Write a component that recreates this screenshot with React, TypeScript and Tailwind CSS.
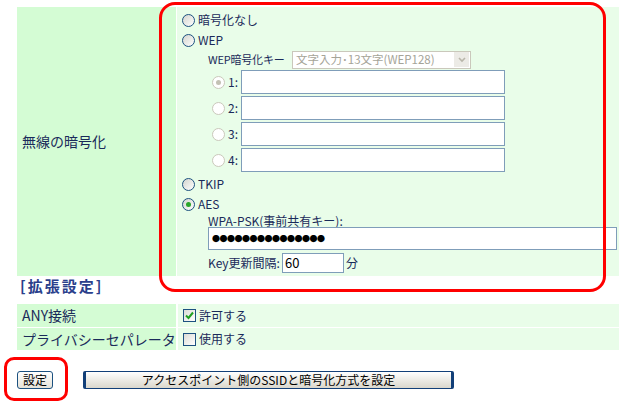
import React from 'react';

const font = { fontFamily: '"Noto Sans CJK JP", "Liberation Sans", sans-serif' };

function Radio({ checked = false, disabled = false }: { checked?: boolean; disabled?: boolean }) {
  return (
    <span
      className={`relative inline-flex h-[13px] w-[13px] shrink-0 items-center justify-center rounded-full border ${
        disabled
          ? 'border-[#cac8bb] bg-white'
          : 'border-[#1c5180] bg-gradient-to-br from-[#d4d4ce] to-white'
      }`}
    >
      {checked && (
        <span
          className={`h-[5px] w-[5px] rounded-full ${disabled ? 'bg-[#c3c1b4]' : 'bg-[#2aa52a]'}`}
        />
      )}
    </span>
  );
}

function Checkbox({ checked = false }: { checked?: boolean }) {
  return (
    <span className="inline-flex h-[13px] w-[13px] shrink-0 items-center justify-center border border-[#1c5180] bg-gradient-to-br from-[#dcdcd6] to-white">
      {checked && (
        <svg width="9" height="9" viewBox="0 0 9 9">
          <path d="M1 4.5 L3.5 7 L8 1.5" stroke="#21a121" strokeWidth="2" fill="none" />
        </svg>
      )}
    </span>
  );
}

function RadioRow({ label, checked }: { label: string; checked?: boolean }) {
  return (
    <div className="flex h-[20px] items-center gap-[3px] pl-[5px]">
      <Radio checked={checked} />
      <span>{label}</span>
    </div>
  );
}

function KeyRow({ n, checked }: { n: number; checked?: boolean }) {
  return (
    <div className="mb-[2px] flex h-[24px] items-center pl-[4px]">
      <Radio disabled checked={checked} />
      <span className="ml-[3px] w-[13px]">{n}:</span>
      <input className="h-[24px] w-[264px] border border-[#7f9db9] bg-white outline-none" />
    </div>
  );
}

export default function App() {
  return (
    <div style={font} className="relative h-[412px] w-[626px] overflow-hidden bg-white text-[12px] text-[#1a2a5a]">
      <div className="w-[619px] pl-[17px] pt-[7px]">
        {/* 無線の暗号化 */}
        <div className="flex gap-px">
          <div className="flex w-[159px] items-center bg-[#d4fcd4] pl-[5px] text-[14px]">無線の暗号化</div>
          <div className="flex-1 bg-[#e9fde9] pb-[3px] pt-[3px]">
            <RadioRow label="暗号化なし" />
            <RadioRow label="WEP" />
            <div className="pl-[31px]">
              <div className="flex h-[19px] items-center">
                <span className="w-[84px] whitespace-nowrap text-[11px] tracking-[-0.2px]">WEP暗号化キー</span>
                <div className="flex h-[18px] w-[179px] items-center justify-between overflow-hidden border border-[#cac8bb] bg-white pl-[3px] text-[11.5px] text-[#a5a498]">
                  <span className="whitespace-nowrap">文字入力･13文字(WEP128)</span>
                  <span className="mr-px flex h-[15px] w-[15px] shrink-0 items-center justify-center bg-[#ecebe6]">
                    <svg width="8" height="6" viewBox="0 0 8 6">
                      <path d="M1 1 L4 4 L7 1" stroke="#b8b6aa" strokeWidth="1.6" fill="none" />
                    </svg>
                  </span>
                </div>
              </div>
              <div className="pt-px">
                <KeyRow n={1} checked />
                <KeyRow n={2} />
                <KeyRow n={3} />
                <KeyRow n={4} />
              </div>
            </div>
            <RadioRow label="TKIP" />
            <RadioRow label="AES" checked />
            <div className="pl-[31px]">
              <div className="flex h-[13px] items-center">WPA-PSK(事前共有キー):</div>
              <input
                readOnly
                value={'●'.repeat(15)}
                className="h-[23px] w-[409px] border border-[#7f9db9] bg-white pl-[3px] text-[8px] tracking-[-0.5px] text-black outline-none"
              />
              <div className="mt-[2px] flex h-[21px] items-center">
                <span>Key更新間隔:</span>
                <input
                  readOnly
                  value="60"
                  className="ml-[2px] h-[20px] w-[62px] border border-[#7f9db9] bg-white pl-[2px] text-[13px] text-black outline-none"
                />
                <span className="ml-[2px]">分</span>
              </div>
            </div>
          </div>
        </div>

        {/* 拡張設定 */}
        <div className="h-[28px] pl-[3px] pt-[1px] text-[15px] font-bold leading-[18px] tracking-[2px] text-[#2b3f8c]">
          [拡張設定]
        </div>

        <div className="flex flex-col gap-px">
          <div className="flex h-[23px] gap-[2px]">
            <div className="flex w-[159px] items-center bg-[#d4fcd4] pl-[5px] text-[14px]">ANY接続</div>
            <div className="flex flex-1 items-center gap-[3px] bg-[#e9fde9] pl-[5px]">
              <Checkbox checked />
              <span className="text-[12px]">許可する</span>
            </div>
          </div>
          <div className="flex h-[22px] gap-[2px]">
            <div className="flex w-[159px] items-center whitespace-nowrap bg-[#d4fcd4] pl-[5px] text-[14px]">プライバシーセパレータ</div>
            <div className="flex flex-1 items-center gap-[3px] bg-[#e9fde9] pl-[5px]">
              <Checkbox />
              <span className="text-[12px]">使用する</span>
            </div>
          </div>
        </div>

        <div className="mt-[21px] flex items-center">
          <button className="flex h-[18px] w-[36px] items-center justify-center rounded-[3px] border border-[#1c5180] bg-gradient-to-b from-white to-[#e6e3d8] text-[12px] text-black">
            設定
          </button>
          <button className="ml-[30px] flex h-[18px] w-[371px] items-center justify-center rounded-[2px] border-x-[3px] border-y border-[#123f78] bg-gradient-to-b from-white to-[#dad7cc] text-[12px] text-black">
            アクセスポイント側のSSIDと暗号化方式を設定
          </button>
        </div>
      </div>

      {/* annotations */}
      <div className="absolute left-[159px] top-[2px] h-[290px] w-[447px] rounded-[16px] border-[3px] border-[#ff0000]" />
      <div className="absolute left-[4px] top-[357px] h-[44px] w-[64px] rounded-[10px] border-[3px] border-[#ff0000]" />
    </div>
  );
}
